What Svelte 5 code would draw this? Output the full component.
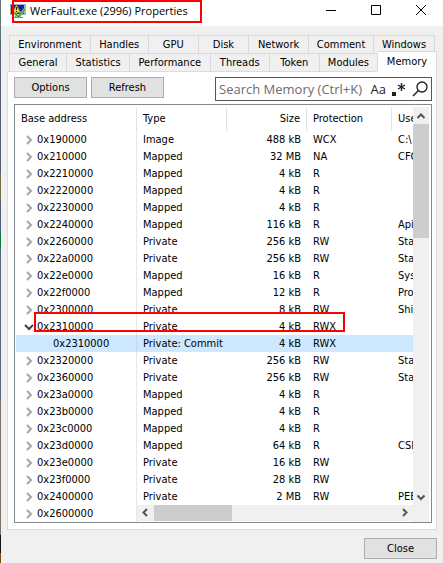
<script>
  const tabRows = [
    [['Environment', 81], ['Handles', 58], ['GPU', 50], ['Disk', 50], ['Network', 60], ['Comment', 65], ['Windows', 61]],
    [['General', 57], ['Statistics', 63], ['Performance', 81], ['Threads', 59], ['Token', 50], ['Modules', 58], ['Memory', 59]]
  ];
  const rows = [
    ['0x190000', 'Image', '488 kB', 'WCX', 'C:\\'],
    ['0x210000', 'Mapped', '32 MB', 'NA', 'CFG'],
    ['0x2210000', 'Mapped', '4 kB', 'R', ''],
    ['0x2220000', 'Mapped', '4 kB', 'R', ''],
    ['0x2230000', 'Mapped', '4 kB', 'R', ''],
    ['0x2240000', 'Mapped', '116 kB', 'R', 'Api'],
    ['0x2260000', 'Private', '256 kB', 'RW', 'Sta'],
    ['0x22a0000', 'Private', '256 kB', 'RW', 'Sta'],
    ['0x22e0000', 'Mapped', '16 kB', 'R', 'Sys'],
    ['0x22f0000', 'Mapped', '12 kB', 'R', 'Pro'],
    ['0x2300000', 'Private', '8 kB', 'RW', 'Shi'],
    ['0x2310000', 'Private', '4 kB', 'RWX', '', 'open'],
    ['0x2310000', 'Private: Commit', '4 kB', 'RWX', '', 'child'],
    ['0x2320000', 'Private', '256 kB', 'RW', 'Sta'],
    ['0x2360000', 'Private', '256 kB', 'RW', 'Sta'],
    ['0x23a0000', 'Mapped', '4 kB', 'R', ''],
    ['0x23b0000', 'Mapped', '4 kB', 'R', ''],
    ['0x23c0000', 'Mapped', '4 kB', 'R', ''],
    ['0x23d0000', 'Mapped', '64 kB', 'R', 'CSR'],
    ['0x23e0000', 'Private', '16 kB', 'RW', ''],
    ['0x23f0000', 'Private', '28 kB', 'RW', ''],
    ['0x2400000', 'Private', '2 MB', 'RW', 'PEB'],
    ['0x2600000', '', '', '', '']
  ];
  let active = $state('Memory');
  let query = $state('');
</script>

<div class="window">
  <header>
    <svg class="app" width="16" height="16" viewBox="0 0 16 16" aria-hidden="true">
      <path d="M0 1h16v11H0z" fill="#a9b0b8" />
      <path d="M1 2h13v9H1z" fill="#1420b8" />
      <path d="M5 12h6v2h2v1H3v-1h2z" fill="#7d858c" />
      <path d="M6.500 2l4 7.500h-8z" fill="#f4d42a" stroke="#b48a08" stroke-width=".7" />
      <path d="M6 4h1v3H6zM6 8h1v1H6z" fill="#222" />
      <path d="M5 10l3.500 4L15 6" fill="none" stroke="#d8f0d8" stroke-width="2.600" />
      <path d="M5 10l3.500 4L15 6" fill="none" stroke="#32a83c" stroke-width="1.800" />
    </svg>
    <h1>WerFault.exe (2996) Properties</h1>
    <div class="controls">
      <button aria-label="Minimize"><svg width="10" height="10"><path d="M0 5.500h10" /></svg></button>
      <button aria-label="Maximize"><svg width="10" height="10"><path d="M.5.5h9v9h-9z" /></svg></button>
      <button aria-label="Close window"><svg width="10" height="10"><path d="M0 0l10 10M10 0L0 10" /></svg></button>
    </div>
    <div class="mark title-mark"></div>
  </header>

  <div class="tabs" role="tablist">
    {#each tabRows as row}
      <div class="tab-row">
        {#each row as [name, weight]}
          <button role="tab" aria-selected={active === name} style:flex-grow={weight} onclick={() => (active = name)}>{name}</button>
        {/each}
      </div>
    {/each}
  </div>

  <main>
    <div class="toolbar">
      <button class="push">Options</button>
      <button class="push">Refresh</button>
      <div class="search">
        <input type="text" aria-label="Search Memory" placeholder="Search Memory (Ctrl+K)" bind:value={query} />
        <button class="case" aria-label="Match case">Aa</button>
        <button aria-label="Regular expression">
          <svg width="14" height="15" viewBox="0 0 14 15"><path d="M0 10h4v4H0z" fill="#222" /><path d="M9.500 1v8M6 3l7 4M13 3L6 7" stroke="#222" stroke-width="1.400" /></svg>
        </button>
        <button aria-label="Search">
          <svg width="16" height="16" viewBox="0 0 16 16" fill="none" stroke="#222" stroke-width="1.400"><circle cx="10" cy="6" r="5" /><path d="M6.500 9.500L1 15" /></svg>
        </button>
      </div>
    </div>

    <div class="list">
      <div class="view">
        <table>
          <colgroup><col class="c1" /><col class="c2" /><col class="c3" /><col class="c4" /><col /></colgroup>
          <thead>
            <tr><th>Base address</th><th>Type</th><th class="num">Size</th><th>Protection</th><th>Use</th></tr>
          </thead>
          <tbody>
            {#each rows as [address, type, size, protection, use, state]}
              <tr class={state}>
                <td>
                  {#if state !== 'child'}
                    <svg class="arrow" width="10" height="10" viewBox="0 0 10 10" aria-hidden="true">
                      <path d={state === 'open' ? 'M1 3l4 4 4-4' : 'M3 1l4 4-4 4'} />
                    </svg>
                  {/if}{address}
                </td>
                <td>{type}</td><td class="num">{size}</td><td>{protection}</td><td>{use}</td>
              </tr>
            {/each}
          </tbody>
        </table>
        <div class="mark row-mark"></div>
      </div>
      <div class="vbar">
        <svg width="16" height="17" viewBox="0 0 16 17"><path d="M4.500 11L8 7.500l3.500 3.500" /></svg>
        <div class="thumb"></div>
        <svg class="end" width="16" height="17" viewBox="0 0 16 17"><path d="M4.500 6.500L8 10l3.500-3.500" /></svg>
      </div>
      <div class="hbar">
        <svg width="17" height="15" viewBox="0 0 17 15"><path d="M10 4L6.500 7.500 10 11" /></svg>
        <div class="thumb"></div>
        <svg class="end" width="17" height="15" viewBox="0 0 17 15"><path d="M7 4l3.500 3.500L7 11" /></svg>
      </div>
    </div>
  </main>

  <footer><button class="push">Close</button></footer>
</div>

<style>
  :global(body) { margin: 0; background: #f0f0f0; }
  .window {
    position: relative;
    box-sizing: border-box;
    min-height: 100vh;
    padding-left: 1px;
    background: #f0f0f0;
    color: #000;
    font: 11px/16px "DejaVu Sans Condensed", "Liberation Sans", sans-serif;
    overflow: hidden;
  }
  .window::before {
    content: "";
    position: absolute;
    inset: 0 auto 0 0;
    width: 1px;
    background: linear-gradient(#5f7474 0 41px, #555e77 41px 174px, #77704f 174px 201px, #50597a 201px 231px, #0f7b4a 231px 249px, #5a6480 249px 400px, #77735c 400px 535px, #111 535px 553px, #7a5010 553px);
  }
  button { margin: 0; padding: 0; border: 0; background: none; color: inherit; font: inherit; }
  svg { display: block; flex: none; }
  header { position: relative; display: flex; align-items: center; height: 26px; padding-left: 9px; background: #fff; }
  .app { margin-bottom: 4px; }
  h1 { margin: 0 0 4px 4px; font: 11px/16px "Open Sans", sans-serif; white-space: nowrap; }
  .controls { display: flex; margin: 0 0 6px auto; }
  .controls button { display: grid; place-items: center; width: 45px; height: 20px; }
  .controls path { fill: none; stroke: #000; }
  .mark { position: absolute; box-sizing: border-box; border: 2px solid #f00; pointer-events: none; }
  .title-mark { left: 11px; top: 0; width: 190px; height: 23px; }

  .tabs { padding: 9px 6px 0 8px; }
  .tab-row { display: flex; height: 18px; margin-right: 2px; border-left: 1px solid #d9d9d9; }
  .tab-row button { flex: 1 1 0; min-width: 0; padding-top: 1px; border-top: 1px solid #d9d9d9; border-right: 1px solid #d9d9d9; white-space: nowrap; }
  .tab-row + .tab-row { margin-right: 0; }
  .tab-row button[aria-selected="true"] { position: relative; height: 21px; margin-top: -2px; padding: 0; background: #fff; }

  main { display: flex; flex-direction: column; margin: 0 6px; padding: 5px 4px 6px 6px; border: 1px solid #dcdcdc; background: #fff; }
  .toolbar { display: flex; gap: 4px; height: 24px; }
  .push { box-sizing: border-box; width: 73px; height: 21px; border: 1px solid #adadad; background: #e1e1e1; }
  .search { box-sizing: border-box; display: flex; align-items: center; gap: 6px; width: 217px; height: 24px; margin-left: auto; padding: 0 3px; border: 1px solid #555; }
  .search input { flex: 1; min-width: 0; padding: 0; border: 0; outline: 0; background: none; font: 13px/20px "Open Sans", sans-serif; }
  .search input::placeholder { color: #6d6d6d; opacity: 1; }
  .case { color: #222; font: 13px/20px "Open Sans", sans-serif; }

  .list { position: relative; display: flex; margin-top: 3px; padding: 2px 1px 0; border: 1px solid #828790; }
  .view { position: relative; flex: 1; min-width: 0; overflow: hidden; }
  table { width: 100%; table-layout: fixed; border-collapse: separate; border-spacing: 0; }
  .c1 { width: 121px; }
  .c2 { width: 90px; }
  .c3 { width: 80px; }
  .c4 { width: 85px; }
  th, td { box-sizing: border-box; padding: 0 0 0 6px; font-weight: 400; text-align: left; white-space: nowrap; overflow: hidden; text-overflow: clip; }
  th { height: 24px; border-right: 1px solid #e2e2e2; }
  th:first-child { padding-left: 5px; }
  th:last-child { border-right: 0; }
  td { height: 17px; }
  td:first-child { border-right: 1px solid #e8e8e8; padding-left: 21px; }
  .num { padding: 0 6px 0 0; text-align: right; }
  .child td { background: #cde8ff; }
  .child td:first-child { padding-left: 37px; border-color: #c0d8ec; }
  .arrow { float: left; margin: 3px 3px 0 -13px; }
  .arrow path { fill: none; stroke: #a6a6a6; stroke-width: 2; }
  .open .arrow path { stroke: #404040; }
  .row-mark { left: 18px; top: 205px; width: 311px; height: 20px; }

  .vbar { display: flex; flex-direction: column; width: 16px; margin-right: 1px; background: #f0f0f0; }
  .vbar path, .hbar path { fill: none; stroke: #555; stroke-width: 2; }
  .vbar .thumb { height: 114px; background: #cdcdcd; }
  .vbar .end { margin: auto 0 16px; }
  .hbar { position: absolute; left: 122px; right: 2px; bottom: 1px; display: flex; height: 16px; padding-right: 16px; background: #f0f0f0; }
  .hbar .thumb { width: 78px; background: #cdcdcd; }
  .hbar .end { margin-left: auto; }

  footer { display: flex; justify-content: flex-end; padding: 8px 6px 5px; }
</style>
